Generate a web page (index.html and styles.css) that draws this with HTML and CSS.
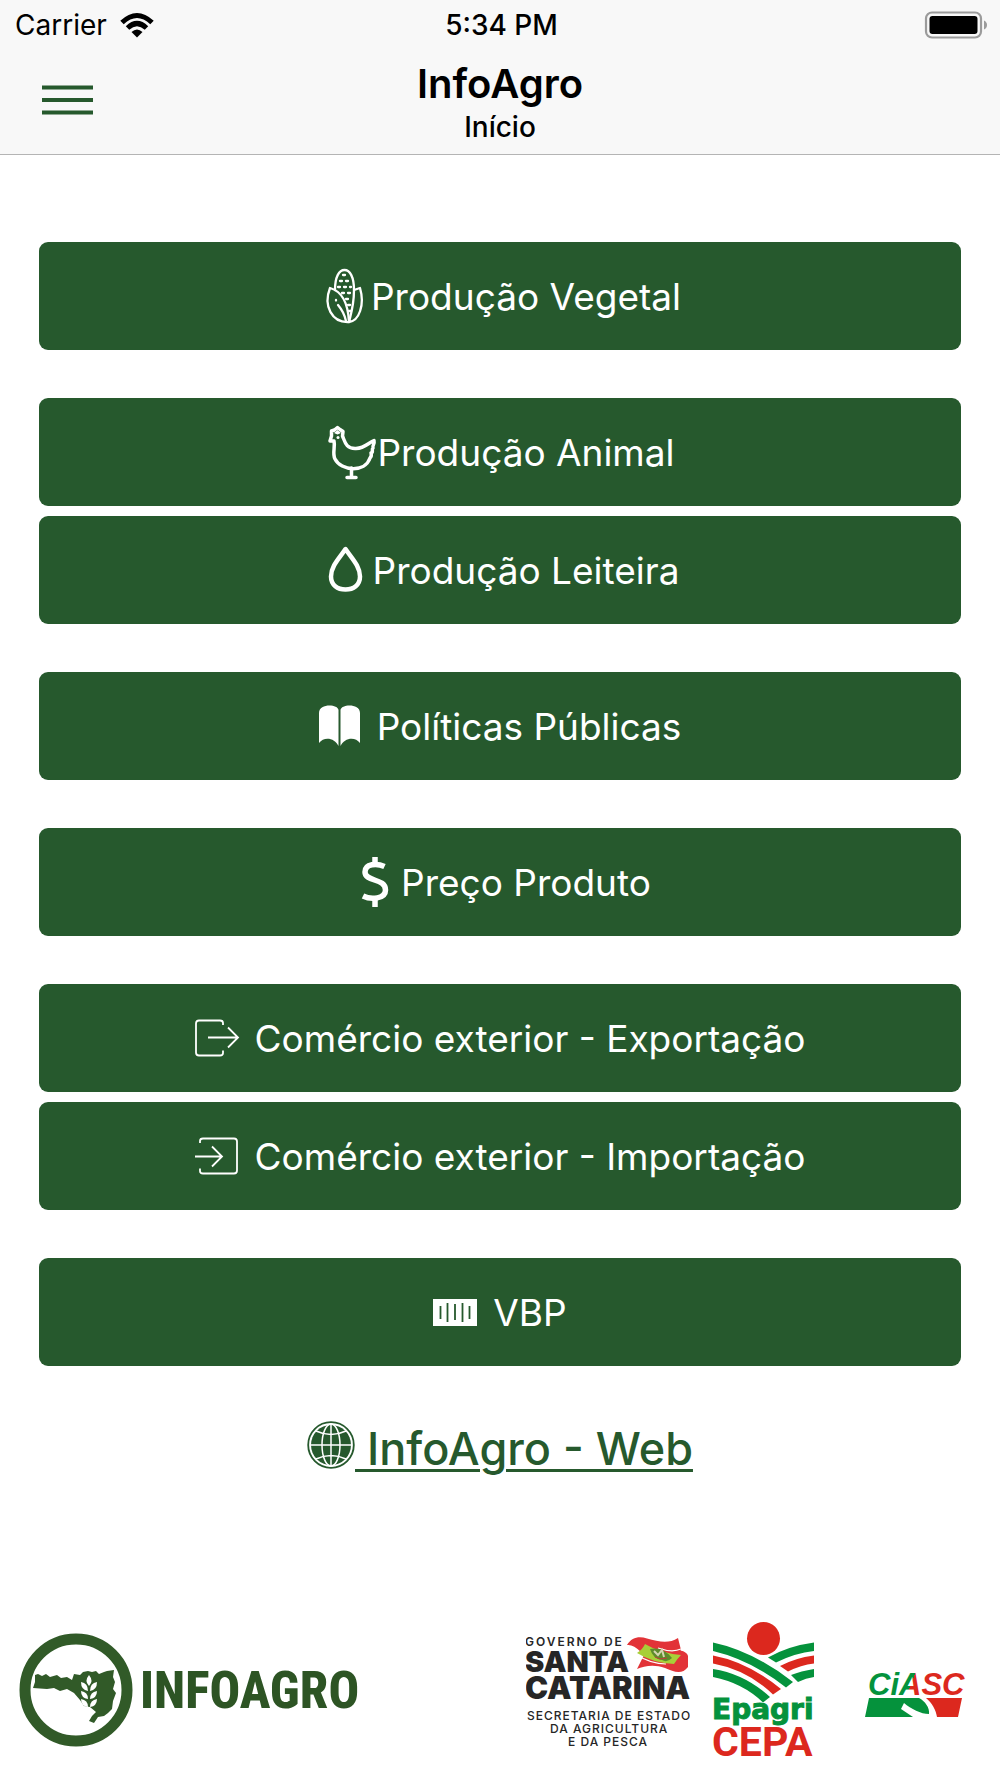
FILE: index.html
```html
<!DOCTYPE html>
<html lang="pt-BR">
<head>
<meta charset="utf-8">
<meta name="viewport" content="width=device-width, initial-scale=1">
<title>InfoAgro</title>
<link rel="stylesheet" href="styles.css">
</head>
<body>
<header class="header">
  <div class="status">
    <span class="carrier">Carrier
      <svg class="wifi" width="34" height="26" viewBox="0 0 34 26" aria-hidden="true">
        <g fill="none" stroke="#000" stroke-width="5">
          <path d="M2 10.500Q17 -3.500 32 10.500"/>
          <path d="M7.500 16Q17 7 26.500 16"/>
        </g>
        <path d="M11.500 20Q17 15 22.500 20L17 25.500Z"/>
      </svg>
    </span>
    <span class="clock">5:34 PM</span>
    <svg class="battery" width="64" height="28" viewBox="0 0 64 28" aria-hidden="true">
      <rect x="2" y="1.500" width="55" height="25" rx="6" fill="none" stroke="#9b9b9b" stroke-width="2.200"/>
      <rect x="5.500" y="5" width="48" height="18" rx="3"/>
      <path d="M60 9.500Q63 11 63 14T60 18.500Z" fill="#9b9b9b"/>
    </svg>
  </div>
  <div class="navbar">
    <button class="menu" type="button" aria-label="Menu">
      <svg width="51" height="30" viewBox="0 0 51 30" aria-hidden="true">
        <path d="M0 2.500H51M0 15H51M0 27.500H51" stroke="#26592d" stroke-width="4"/>
      </svg>
    </button>
    <div class="titles">
      <h1 class="title">InfoAgro</h1>
      <p class="subtitle">Início</p>
    </div>
  </div>
</header>

<main class="main">
  <nav class="groups">
    <div class="group">
      <button class="option" type="button">
        <svg width="52" height="56" viewBox="2 0 52 56" aria-hidden="true">
          <g fill="none" stroke="#fff" stroke-width="2.300" stroke-linejoin="round" stroke-linecap="round">
            <path d="M18 22C18 9 22 2 27.500 2S37 9 37 22"/>
            <path d="M13 20C24 23 31 34 32 54C15 55 6 38 13 20Z"/>
            <path d="M37 22L43 20C48 37 42 53 32 54C34 46 37 37 37 22Z"/>
            <path d="M21 37Q27 44 29 53M19 32V32.500"/>
            <path stroke-dasharray="2 4" d="M26 7H29M23 13H33M21 19H34M25 25H35M29 31H35M31 37H35M32 43H34"/>
          </g>
        </svg>
        <span>Produção Vegetal</span>
      </button>
    </div>
    <div class="group">
      <button class="option" type="button">
        <svg width="52" height="56" viewBox="0 0 52 56" aria-hidden="true">
          <g fill="none" stroke="#fff" stroke-width="3.500" stroke-linejoin="round" stroke-linecap="round">
            <path d="M7 17L5 17L6.500 12L6.500 7L9.500 6L12.500 3.500L15 5.500L18 7.500L17.500 12C20 18 21 25 31 24.500C40 24 43 19 49 16.500C50 21 47 21 48 24C46 26 49 28 46 29C47 32 46 33 45 34C40 49 16 47 10 35C7 29 10.500 23 9 17Z"/>
            <path d="M26.500 44V53M22 53.500H31"/>
          </g>
          <path d="M9 9L12.500 6L16 9L12.500 10.500Z" fill="#fff"/>
          <circle cx="13" cy="13.500" r="1.500" fill="#fff"/>
        </svg>
        <span>Produção Animal</span>
      </button>
      <button class="option" type="button">
        <svg width="52" height="56" viewBox="2 0 52 56" aria-hidden="true">
          <path d="M26.500 7C20.500 16 12 24 12 34.500C12 43 18.500 47.500 26.500 47.500S41 43 41 34.500C41 24 32.500 16 26.500 7Z" fill="none" stroke="#fff" stroke-width="4.500" stroke-linejoin="round"/>
        </svg>
        <span>Produção Leiteira</span>
      </button>
    </div>
    <div class="group">
      <button class="option" type="button">
        <svg width="58" height="56" viewBox="0 0 58 56" aria-hidden="true">
          <path fill="#fff" d="M0 15C0 5 19 6 19.500 12V48C16 40 5 38 0 45ZM41 15C41 5 22 6 21.500 12V48C25 40 36 38 41 45Z"/>
        </svg>
        <span>Políticas Públicas</span>
      </button>
    </div>
    <div class="group">
      <button class="option" type="button">
        <svg width="52" height="56" viewBox="2 0 52 56" aria-hidden="true">
          <g fill="none" stroke="#fff" stroke-width="5.500">
            <path d="M37.500 12.500C30 9 18 9.500 18 18C18 28 38.500 24 38.500 36C38.500 45 24 46 16 42"/>
            <path d="M28 3V10M28 45V53"/>
          </g>
        </svg>
        <span>Preço Produto</span>
      </button>
    </div>
    <div class="group">
      <button class="option" type="button">
        <svg width="60" height="56" viewBox="0 0 60 56" aria-hidden="true">
          <g fill="none" stroke="#fff" stroke-width="1.800">
            <path d="M28 15V13Q28 10.500 25 10.500H4Q1 10.500 1 13.500V42.500Q1 45.500 4 45.500H25Q28 45.500 28 43V40.500"/>
            <path d="M13 27.500H43M33 17.500L43 27.500L33 37.500"/>
          </g>
        </svg>
        <span>Comércio exterior - Exportação</span>
      </button>
      <button class="option" type="button">
        <svg width="60" height="56" viewBox="0 0 60 56" aria-hidden="true">
          <g fill="none" stroke="#fff" stroke-width="1.800">
            <path d="M5 15V13Q5 10.500 8 10.500H39Q42 10.500 42 13.500V42.500Q42 45.500 39 45.500H8Q5 45.500 5 43V40.500"/>
            <path d="M0 28.500H27M17 18.500L27 28.500L17 38.500"/>
          </g>
        </svg>
        <span>Comércio exterior - Importação</span>
      </button>
    </div>
    <div class="group">
      <button class="option" type="button">
        <svg width="60" height="56" viewBox="0 0 60 56" aria-hidden="true">
          <rect x="0" y="15" width="44" height="27" fill="#fff"/>
          <path d="M7.500 22V35M14.500 19V38M22 20V36M29.500 19V38M36.500 22V35" stroke="#26592d" stroke-width="1.800"/>
        </svg>
        <span>VBP</span>
      </button>
    </div>
  </nav>

  <a class="web" href="#web">
    <svg width="48" height="48" viewBox="0 0 48 48" aria-hidden="true">
      <circle cx="24" cy="24" r="22.800" fill="none" stroke="#26592d" stroke-width="1.800"/>
      <circle cx="24" cy="24" r="20" fill="#26592d"/>
      <g fill="none" stroke="#fff" stroke-width="1.500">
        <path d="M24 3V45M3 24H45M9 10Q24 17 39 10M9 38Q24 31 39 38"/>
        <ellipse cx="24" cy="24" rx="9" ry="21"/>
      </g>
    </svg>
    <span class="web-text"> InfoAgro - Web</span>
  </a>
</main>

<footer class="footer">
  <div class="brand">
    <svg width="114" height="114" viewBox="0 0 114 114" aria-hidden="true">
      <circle cx="57" cy="57" r="51" fill="#fff" stroke="#315a28" stroke-width="11"/>
      <path fill="#315a28" d="M16 42L19 41L23 43L27 41L31 44L38 42L42 45L48 44L53 47L55 41L61 42L64 39L69 38L73 39L77 38L80 41L85 39L88 38L95 37L94 44L96 49L94 56L97 60L94 68L93 76L89 80L85 83L79 84L75 90L70 88L73 83L77 79L71 74L65 73L61 67L55 60L48 56L41 58L35 55L28 56L14 55L16 49Z"/>
      <g fill="#fff">
        <path d="M70 42Q75 48 70 53Q65 48 70 42Z"/>
        <path d="M62 49Q69 50 69 58Q62 57 62 49ZM62 58Q69 59 69 66Q62 65 62 58ZM62 66Q69 67 69 74Q62 73 62 66Z"/>
        <path d="M78 49Q71 50 71 58Q78 57 78 49ZM78 58Q71 59 71 66Q78 65 78 58ZM78 66Q71 67 71 74Q78 73 78 66Z"/>
      </g>
    </svg>
    <span class="brand-name">INFOAGRO</span>
  </div>
  <div class="partners">
    <svg class="santa" width="164" height="146" viewBox="0 0 164 146">
      <text class="tracked" x="-1" y="24">GOVERNO DE</text>
      <text class="heavy santa-name" x="-1" y="50">SANTA</text>
      <text class="heavy" x="-1" y="77">CATARINA</text>
      <text class="small" x="1" y="98">SECRETARIA DE ESTADO</text>
      <text class="small" x="24" y="111">DA AGRICULTURA</text>
      <text class="small" x="42" y="124">E DA PESCA</text>
      <path fill="#e23338" d="M101 23C106 15 113 14 121 16.500C133 20 143 22 152 16L155 28L149 38L115 30Q107 22 101 23Z"/>
      <path fill="#e23338" d="M111 47L118 33L151 29C156 28 161 30 162 34V45C156 53 148 50 139 46C128 42 118 44 111 47Z"/>
      <path d="M132 26Q146 31 155 27" fill="none" stroke="#fff" stroke-width="1.200"/>
      <path d="M111 33Q125 42 140 42" fill="none" stroke="#fff" stroke-width="1.200"/>
      <path fill="#a8cf38" d="M119 22Q134 31 155 33Q151 37 148 42Q127 41 111 31Q117 27 119 22Z"/>
      <path fill="#5d8b2c" d="M124 27Q137 24 146 36Q141 41 136 38Q127 37 124 27Z"/>
      <path fill="none" stroke="#d6d6b2" stroke-width="2" d="M128 29L132 33L136 28L138 35"/>
      <path fill="none" stroke="#c5383a" stroke-width="1" d="M129 35L134 37L141 36"/>
    </svg>
    <svg class="epagri" width="102" height="146" viewBox="0 0 102 146">
      <circle cx="50.500" cy="16.500" r="16.500" fill="#dc281e"/>
      <g fill="#05923c">
        <path d="M0 20.500Q40 29 80 60L73 65.500Q38 38 0 29Z"/>
        <path d="M101 20.500Q75 24 55 35.500L63 40.500Q82 31 101 29Z"/>
        <path d="M0 47Q32 52 57 75L50 80.500Q30 61 0 55Z"/>
        <path d="M101 47Q88 49 78 53L85 60Q93 56 101 55Z"/>
      </g>
      <g fill="#dc281e">
        <path d="M0 33.500Q35 40 68 67L60 72.500Q35 48 0 41.500Z"/>
        <path d="M101 33.500Q82 36 67 44L75 49.500Q88 43 101 41.500Z"/>
      </g>
      <text class="epagri-name" x="-1" y="97">Epagri</text>
      <text class="cepa-name" x="-1" y="134">CEPA</text>
    </svg>
    <svg class="ciasc" width="102" height="146" viewBox="0 0 102 146">
      <defs>
        <linearGradient id="split" gradientUnits="userSpaceOnUse" x1="43" y1="62" x2="48" y2="64">
          <stop offset="0.500" stop-color="#05923c"/>
          <stop offset="0.500" stop-color="#dc281e"/>
        </linearGradient>
      </defs>
      <text class="ciasc-name" x="3" y="73" fill="url(#split)">CiASC</text>
      <path fill="#05923c" d="M4 76H54C60 79 65 86 64 92C56 92 46 87 39 81L36 87L48 95H0Z"/>
      <path fill="#dc281e" d="M61 76H97L93 95H72C71 88 67 81 61 76Z"/>
    </svg>
  </div>
</footer>
</body>
</html>
```
FILE: styles.css
```css
* {
  box-sizing: border-box;
}

body {
  display: flex;
  flex-direction: column;
  min-height: 100vh;
  margin: 0;
  background: #fff;
  color: #000;
  font-family: Inter, "Liberation Sans", sans-serif;
}

svg {
  display: block;
  flex: none;
}

button {
  border: 0;
  font: inherit;
  cursor: pointer;
}

.header {
  background: #f8f8f8;
  border-bottom: 1px solid #b4b4b4;
}

.status {
  display: grid;
  grid-template-columns: 1fr auto 1fr;
  align-items: center;
  height: 50px;
  padding: 0 12px 0 15px;
  font-size: 28px;
}

.carrier {
  display: flex;
  align-items: center;
  gap: 13px;
}

.clock {
  font-weight: 500;
}

.battery {
  justify-self: end;
}

.navbar {
  display: grid;
  grid-template-columns: 1fr auto 1fr;
  align-items: center;
  height: 104px;
  padding: 0 42px;
}

.menu {
  justify-self: start;
  padding: 0 0 4px;
  background: none;
}

.titles {
  padding-top: 2px;
  text-align: center;
}

.title {
  margin: 0;
  font-size: 40px;
  font-weight: 600;
  line-height: 48px;
}

.subtitle {
  margin: 0;
  font-size: 28px;
  font-weight: 500;
  line-height: 38px;
}

.main {
  padding: 87px 39px 0;
}

.groups {
  display: flex;
  flex-direction: column;
  gap: 48px;
}

.group {
  display: flex;
  flex-direction: column;
  gap: 10px;
}

.option {
  display: flex;
  align-items: center;
  justify-content: center;
  width: 100%;
  height: 108px;
  padding: 0;
  border-radius: 9px;
  background: #26592d;
  color: #fff;
  font-size: 37px;
  white-space: nowrap;
}

.web {
  display: flex;
  justify-content: center;
  margin-top: 55px;
  color: #26592d;
  font-size: 45px;
  font-weight: 500;
  line-height: 56px;
  text-decoration: none;
}

.web-text {
  white-space: pre;
  text-decoration: underline;
  text-decoration-thickness: 3px;
  text-underline-offset: 4px;
}

.footer {
  display: flex;
  align-items: flex-start;
  justify-content: space-between;
  margin-top: auto;
  padding: 0 33px 10px 19px;
}

.brand {
  display: flex;
  align-items: center;
  gap: 7px;
  margin-top: 11px;
}

.brand-name {
  color: #2d5424;
  font-family: "Roboto Condensed", "Open Sans Condensed", sans-serif;
  font-size: 51px;
  font-weight: 800;
}

.partners {
  display: flex;
}

.santa {
  margin-right: 23px;
  fill: #262626;
}

.epagri {
  margin-right: 50px;
}

.tracked {
  font-size: 12px;
  font-weight: 600;
  letter-spacing: 2px;
}

.heavy {
  font-size: 31px;
  font-weight: 900;
}

.santa-name {
  font-size: 29px;
}

.small {
  font-size: 12px;
  font-weight: 500;
  letter-spacing: 1px;
}

.epagri-name {
  fill: #05923c;
  stroke: #05923c;
  stroke-width: 1px;
  font-family: "DejaVu Sans", sans-serif;
  font-size: 28px;
  font-weight: 700;
}

.cepa-name {
  fill: #dc281e;
  font-family: Roboto, sans-serif;
  font-size: 41px;
  font-weight: 700;
}

.ciasc-name {
  font-family: "Liberation Sans", sans-serif;
  font-size: 31px;
  font-style: italic;
  font-weight: 700;
}
```
